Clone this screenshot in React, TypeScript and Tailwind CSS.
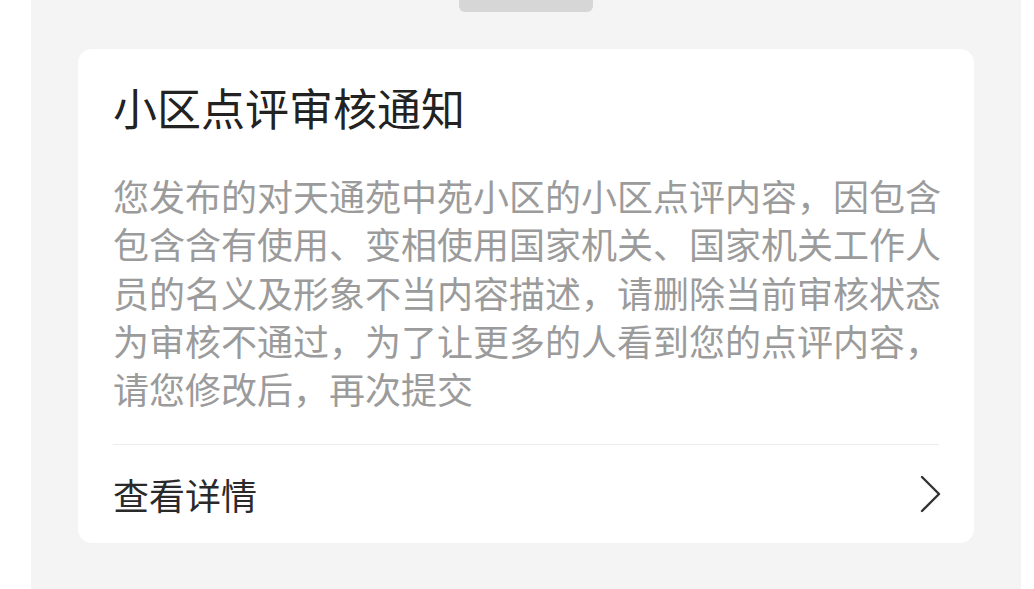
import React from "react";

const lines = [
  "您发布的对天通苑中苑小区的小区点评内容，因包含",
  "包含含有使用、变相使用国家机关、国家机关工作人",
  "员的名义及形象不当内容描述，请删除当前审核状态",
  "为审核不通过，为了让更多的人看到您的点评内容，",
];

const App: React.FC = () => {
  return (
    <div
      className="w-[1034px] h-[589px] bg-white flex overflow-hidden"
      style={{ fontFamily: '"Noto Sans CJK SC", "Noto Sans", sans-serif' }}
    >
      <div className="w-[31px] shrink-0" />
      <div className="w-[990px] shrink-0 bg-[#f4f4f4] flex flex-col">
        {/* Top handle */}
        <div className="mx-auto w-[134px] h-[12px] bg-[#d6d6d6] rounded-b-[6px]" />

        {/* Card */}
        <div className="mx-[47px] mt-[37px] bg-white rounded-[14px] px-[35px]">
          <div className="pt-[28px] text-[44px] leading-[60px] text-[#222]">
            小区点评审核通知
          </div>

          <div className="mt-[34px] text-[36px] leading-[48.25px] text-[#9b9b9b]">
            {lines.map((line) => (
              <div
                key={line}
                className="whitespace-nowrap text-justify [text-align-last:justify]"
              >
                {line}
              </div>
            ))}
            <div className="whitespace-nowrap">请您修改后，再次提交</div>
          </div>

          <div className="mt-[32px] h-px bg-[#ececec]" />

          <div className="flex items-center justify-between h-[98px]">
            <span className="text-[36px] text-[#2a2a2a]">查看详情</span>
            <svg
              width="24"
              height="40"
              viewBox="0 0 24 40"
              fill="none"
              className="mr-[-3px]"
            >
              <path
                d="M4 3 L21 20 L4 37"
                stroke="#333"
                strokeWidth="2.4"
                strokeLinecap="round"
                strokeLinejoin="round"
              />
            </svg>
          </div>
        </div>
      </div>
      <div className="flex-1" />
    </div>
  );
};

export default App;
